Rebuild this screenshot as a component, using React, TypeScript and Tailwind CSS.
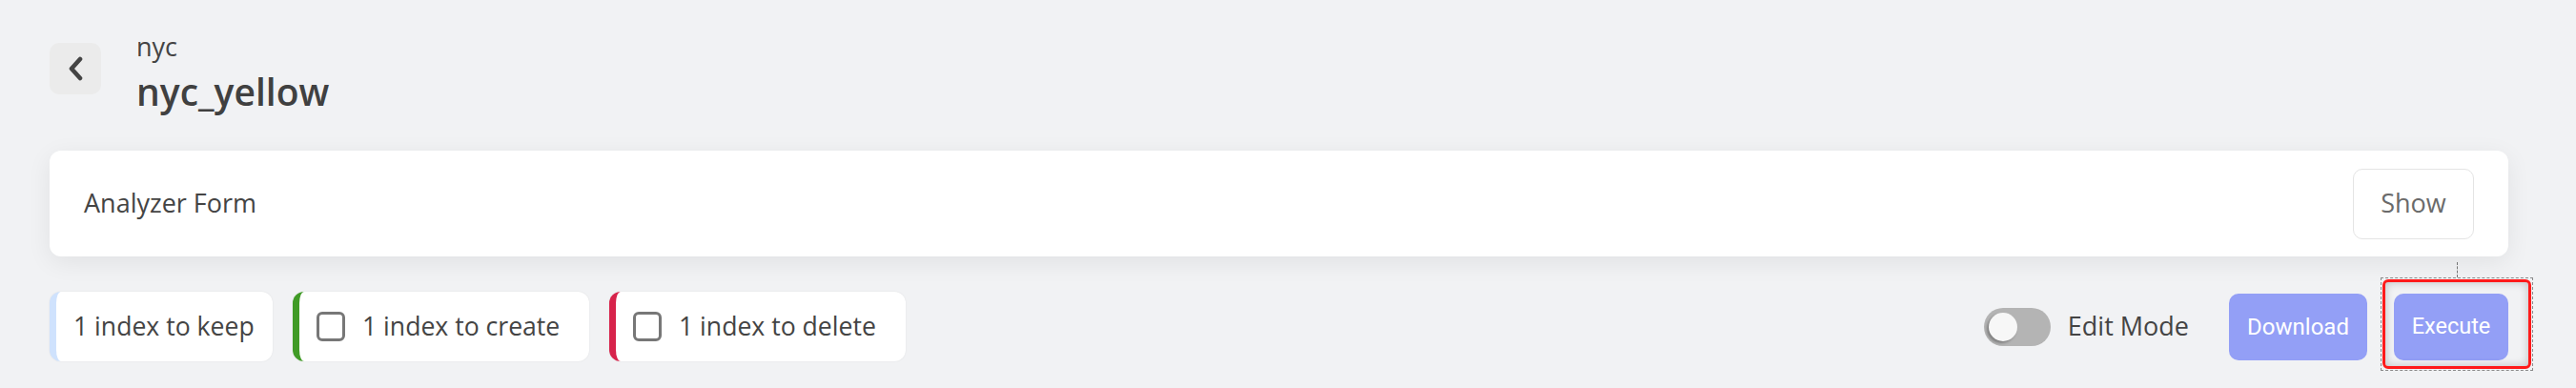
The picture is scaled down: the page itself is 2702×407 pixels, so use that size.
import { useState } from "react";

type IndexKind = "keep" | "create" | "delete";

const indexCards: { kind: IndexKind; label: string; bar: string; width: string; checkable: boolean }[] = [
  { kind: "keep", label: "1 index to keep", bar: "border-[#cfe2fd]", width: "w-[234px]", checkable: false },
  { kind: "create", label: "1 index to create", bar: "border-[#409b26]", width: "w-[311px]", checkable: true },
  { kind: "delete", label: "1 index to delete", bar: "border-[#d7234b]", width: "w-[311px]", checkable: true },
];

function BackButton() {
  return (
    <button
      type="button"
      className="w-[54px] h-[54px] mt-[12px] rounded-[10px] bg-[#ebebeb] flex items-center justify-center shrink-0"
      title="Back"
    >
      <svg width="18" height="26" viewBox="0 0 18 26" fill="none">
        <polyline points="14,3 5,13 14,23" stroke="#444" strokeWidth="4.6" strokeLinecap="round" strokeLinejoin="round" />
      </svg>
    </button>
  );
}

function Toggle({ on, onChange }: { on: boolean; onChange: (v: boolean) => void }) {
  return (
    <button
      type="button"
      onClick={() => onChange(!on)}
      className={`relative w-[70px] h-[40px] rounded-full shrink-0 ${on ? "bg-[#939ff6]" : "bg-[#b4b4b4]"}`}
    >
      <span
        className={`absolute top-[5px] w-[30px] h-[30px] rounded-full bg-[#f7f7f7] shadow-[-2px_2px_3px_rgba(0,0,0,0.3)] ${on ? "left-[35px]" : "left-[5px]"}`}
      />
    </button>
  );
}

export default function App() {
  const [editMode, setEditMode] = useState(false);
  const [checked, setChecked] = useState<Record<string, boolean>>({});

  return (
    <div className="min-h-screen w-full bg-[#f1f2f4] pl-[52px] pr-[71px] pt-[33px] font-['Open_Sans',sans-serif] text-[#444]">
      {/* Header */}
      <div className="flex items-start gap-[37px]">
        <BackButton />
        <div className="flex flex-col">
          <span className="text-[27px] leading-[32px]">nyc</span>
          <h1 className="mt-[9px] text-[39px] leading-[44px] font-semibold text-[#404040]">nyc_yellow</h1>
        </div>
      </div>

      {/* Analyzer form card */}
      <div className="mt-[40px] h-[111px] rounded-[12px] bg-white px-[36px] flex items-center justify-between shadow-[0_6px_26px_rgba(0,0,0,0.07)]">
        <span className="text-[27px] text-[#444]">Analyzer Form</span>
        <button
          type="button"
          className="w-[127px] h-[74px] rounded-[10px] border border-[#e4e4e4] bg-white text-[27px] text-[#6a6a6a]"
        >
          Show
        </button>
      </div>

      {/* Actions row */}
      <div className="mt-[37px] flex items-center justify-between">
        <div className="flex items-center gap-[21px]">
          {indexCards.map((c) => (
            <div
              key={c.kind}
              className={`${c.width} h-[73px] rounded-[12px] bg-white border-l-[7px] ${c.bar} pl-[18px] flex items-center gap-[18px] shadow-[0_0_2px_rgba(0,0,0,0.08)]`}
            >
              {c.checkable && (
                <button
                  type="button"
                  onClick={() => setChecked((s) => ({ ...s, [c.kind]: !s[c.kind] }))}
                  className={`w-[30px] h-[31px] rounded-[6px] border-[3px] border-[#777] shrink-0 ${checked[c.kind] ? "bg-[#777]" : "bg-white"}`}
                />
              )}
              <span className="text-[26.6px] text-[#444] whitespace-nowrap">{c.label}</span>
            </div>
          ))}
        </div>

        <div className="flex items-center">
          <Toggle on={editMode} onChange={setEditMode} />
          <span className="ml-[18px] text-[27px] text-[#444]">Edit Mode</span>
          <button
            type="button"
            className="ml-[42px] w-[145px] h-[70px] rounded-[10px] bg-[#939ff6] text-white text-[24px] font-['Roboto',sans-serif]"
          >
            Download
          </button>
          <div className="relative ml-[28px]">
            <button
              type="button"
              className="w-[120px] h-[70px] rounded-[10px] bg-[#939ff6] text-white text-[23.5px] font-['Roboto',sans-serif]"
            >
              Execute
            </button>
            {/* selection overlay */}
            <div className="absolute left-[-14px] right-[-26px] top-[-17px] bottom-[-11px] border border-dashed border-[#8a8a8a] pointer-events-none">
              <div className="absolute inset-[1px] rounded-[6px] border-[3px] border-[#ff1a1a] shadow-[inset_0_0_10px_rgba(0,0,0,0.22)]" />
              <div className="absolute left-[79px] top-[-17px] h-[16px] border-l border-dashed border-[#777]" />
            </div>
          </div>
        </div>
      </div>
    </div>
  );
}
